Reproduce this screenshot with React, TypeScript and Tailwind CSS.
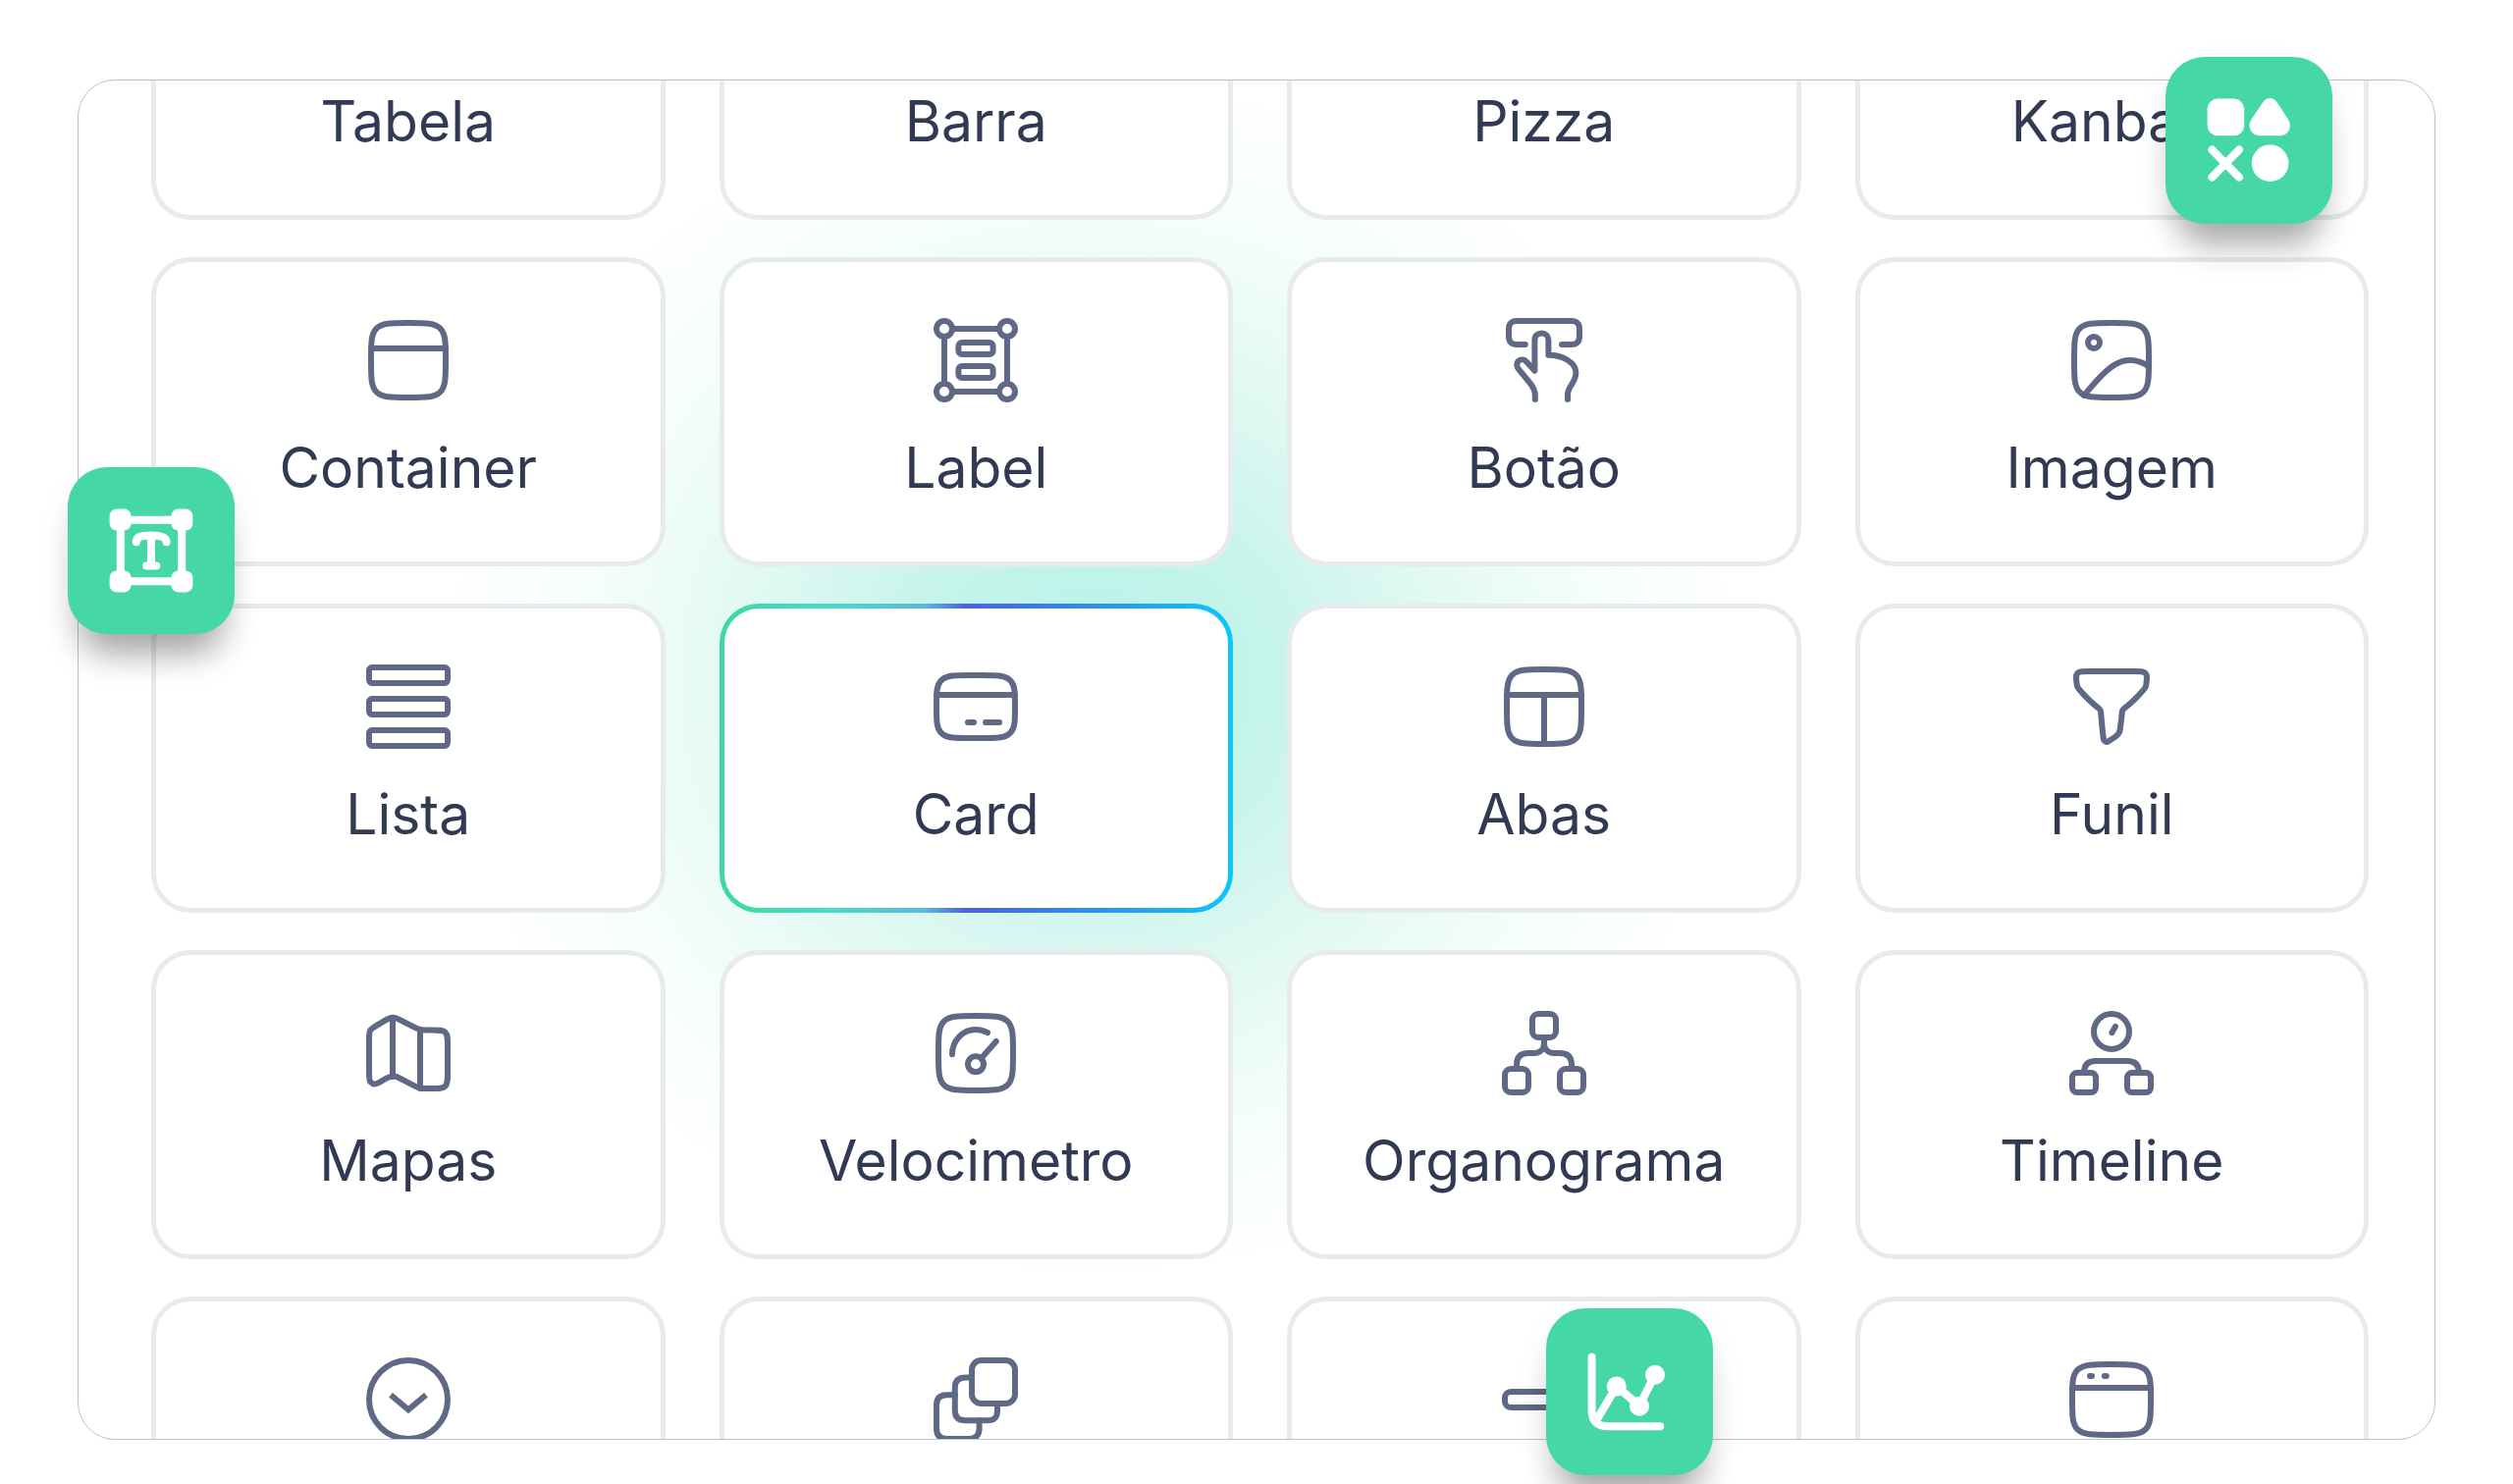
import type { ReactNode } from "react";
import { ChartNoAxesColumn, ChartPie, Columns3, Table } from "lucide-react";

type Component = {
  key: string;
  nome?: string;
  rotulo?: string;
  icone: ReactNode;
  ativo?: boolean;
};

const SQUIRCLE =
  "M2.5 12C2.5 7.52 2.5 5.28 3.89 3.89C5.28 2.5 7.52 2.5 12 2.5C16.48 2.5 18.72 2.5 20.11 3.89C21.5 5.28 21.5 7.52 21.5 12C21.5 16.48 21.5 18.72 20.11 20.11C18.72 21.5 16.48 21.5 12 21.5C7.52 21.5 5.28 21.5 3.89 20.11C2.5 18.72 2.5 16.48 2.5 12Z";

function Icon({ children }: { children: ReactNode }) {
  return (
    <svg
      viewBox="0 0 24 24"
      className="size-24 text-[#5f6885]"
      fill="none"
      stroke="currentColor"
      strokeWidth={1.5}
      strokeLinecap="round"
      strokeLinejoin="round"
      aria-hidden="true"
    >
      {children}
    </svg>
  );
}

const components: Component[] = [
  { key: "tabela", nome: "Tabela", icone: <Table className="size-24" strokeWidth={1.5} /> },
  { key: "barra", nome: "Barra", icone: <ChartNoAxesColumn className="size-24" strokeWidth={1.5} /> },
  { key: "pizza", nome: "Pizza", icone: <ChartPie className="size-24" strokeWidth={1.5} /> },
  { key: "kanban", nome: "Kanban", icone: <Columns3 className="size-24" strokeWidth={1.5} /> },
  {
    key: "container",
    nome: "Container",
    icone: (
      <Icon>
        <path d={SQUIRCLE} />
        <path d="M2.5 9H21.5" />
      </Icon>
    ),
  },
  {
    key: "label",
    nome: "Label",
    icone: (
      <Icon>
        <circle cx="4" cy="4" r="2" />
        <circle cx="20" cy="4" r="2" />
        <circle cx="4" cy="20" r="2" />
        <circle cx="20" cy="20" r="2" />
        <path d="M6 4H18M6 20H18M4 6V18M20 6V18" />
        <rect x="7.6" y="7.5" width="8.8" height="3" rx="0.9" />
        <rect x="7.6" y="13.5" width="8.8" height="3" rx="0.9" />
      </Icon>
    ),
  },
  {
    key: "botao",
    nome: "Botão",
    icone: (
      <Icon>
        <path d="M7.2 8H5C3.7 8 3 7.3 3 6V4C3 2.7 3.7 2 5 2H19C20.3 2 21 2.7 21 4V6C21 7.3 20.3 8 19 8H16.5" />
        <path d="M9.7 22V20.8C9.7 19.6 9.1 18.6 8 17.3L5.5 14.3C4.9 13.5 4.9 12.6 5.6 12.1C6.2 11.7 7 11.8 7.5 12.4L9.6 14.7V6.8C9.6 5.8 10.4 5.1 11.4 5.1C12.3 5.1 13.1 5.8 13.1 6.8V10.7C16.6 10.7 20.1 12.5 20.1 15.2C20.1 17.8 18 18.6 18 20.7V22" />
      </Icon>
    ),
  },
  {
    key: "imagem",
    nome: "Imagem",
    icone: (
      <Icon>
        <circle cx="7.5" cy="7.5" r="1.5" />
        <path d={SQUIRCLE} />
        <path d="M5 21C9.37 15.78 14.27 8.88 21.5 13.54" />
      </Icon>
    ),
  },
  {
    key: "lista",
    nome: "Lista",
    icone: (
      <Icon>
        <rect x="2" y="2" width="20" height="4" rx="0.8" />
        <rect x="2" y="10" width="20" height="4" rx="0.8" />
        <rect x="2" y="18" width="20" height="4" rx="0.8" />
      </Icon>
    ),
  },
  {
    key: "card",
    nome: "Card",
    ativo: true,
    icone: (
      <Icon>
        <path d="M2 12C2 8.46 2 6.69 3.05 5.51C3.22 5.32 3.41 5.15 3.61 4.99C4.86 4 6.74 4 10.5 4H13.5C17.26 4 19.14 4 20.39 4.99C20.59 5.15 20.78 5.32 20.95 5.51C22 6.69 22 8.46 22 12C22 15.54 22 17.31 20.95 18.49C20.78 18.68 20.59 18.85 20.39 19.01C19.14 20 17.26 20 13.5 20H10.5C6.74 20 4.86 20 3.61 19.01C3.41 18.85 3.22 18.68 3.05 18.49C2 17.31 2 15.54 2 12Z" />
        <path d="M10 16H11.5M14.5 16H18M2 9H22" />
      </Icon>
    ),
  },
  {
    key: "abas",
    nome: "Abas",
    icone: (
      <Icon>
        <path d={SQUIRCLE} />
        <path d="M2.5 9H21.5M12 9V21.5" />
      </Icon>
    ),
  },
  {
    key: "funil",
    nome: "Funil",
    icone: (
      <Icon>
        <path d="M8.86 12.51C6.38 10.65 4.6 8.6 3.63 7.45C3.33 7.09 3.23 6.83 3.17 6.38C2.97 4.82 2.86 4.04 3.32 3.52C3.78 3 4.6 3 6.24 3H17.76C19.4 3 20.22 3 20.68 3.52C21.14 4.04 21.03 4.82 20.83 6.38C20.77 6.83 20.67 7.09 20.37 7.45C19.4 8.6 17.61 10.65 15.13 12.51C14.9 12.68 14.74 12.95 14.71 13.27C14.46 15.99 14.23 17.48 14.09 18.23C13.86 19.45 12.14 20.18 11.22 20.82C10.67 21.21 10.01 20.75 9.94 20.14C9.8 19 9.55 16.69 9.27 13.27C9.24 12.95 9.09 12.68 8.86 12.51Z" />
      </Icon>
    ),
  },
  {
    key: "mapas",
    nome: "Mapas",
    icone: (
      <Icon>
        <path d="M2 8.4C2 7.3 2 6.7 2.3 6.2C2.5 5.8 3 5.5 4 4.9L6.2 3.6C7.8 2.7 8.3 2.7 10 3.6L13.9 5.6C14.7 6 15 6.1 15.9 6.1H18C19.9 6.1 20.8 6.1 21.4 6.7C22 7.3 22 8.2 22 10.2V16.9C22 18.8 22 19.8 21.4 20.4C20.8 21 19.9 21 18 21H16.4C15.1 21 14.9 21 13.7 20.4L10.8 18.9C10 18.5 9.3 18 8.5 17.9C7.5 17.8 6.6 18.3 5.7 18.8C4.4 19.6 3.8 20 3.2 19.9C2.9 19.8 2.6 19.6 2.3 19.3C2 18.9 2 18.2 2 16.6Z" />
        <path d="M8 3V18M15 6V21" />
      </Icon>
    ),
  },
  {
    key: "velocimetro",
    nome: "Velocimetro",
    icone: (
      <Icon>
        <path d={SQUIRCLE} />
        <circle cx="12" cy="14.8" r="2" />
        <path d="M13.4 13.3L17.2 9M6 12.3C6 8.8 8.7 6 12 6C13.1 6 14.1 6.3 15 6.8" />
      </Icon>
    ),
  },
  {
    key: "organograma",
    nome: "Organograma",
    icone: (
      <Icon>
        <rect x="9" y="2" width="6" height="6" rx="1.5" />
        <rect x="2" y="16" width="6" height="6" rx="1.5" />
        <rect x="16" y="16" width="6" height="6" rx="1.5" />
        <path d="M5 16V15C5 13 6 12 8 12H9.5C11 12 12 11 12 9.5V8M19 16V15C19 13 18 12 16 12H14.5C13 12 12 11 12 9.5" />
      </Icon>
    ),
  },
  {
    key: "timeline",
    nome: "Timeline",
    icone: (
      <Icon>
        <circle cx="12" cy="6.5" r="4.5" />
        <path d="M13 5.2L12.1 6.8M5 17C5 15 6 14 8 14H16C18 14 19 15 19 17" />
        <rect x="2" y="17" width="6" height="5" rx="1.2" />
        <rect x="16" y="17" width="6" height="5" rx="1.2" />
      </Icon>
    ),
  },
  {
    key: "seletor",
    rotulo: "Seletor",
    icone: (
      <Icon>
        <circle cx="12" cy="12" r="10" />
        <path d="M7.5 10.8L12 14.6L16.5 10.8" strokeLinecap="butt" strokeLinejoin="miter" />
      </Icon>
    ),
  },
  {
    key: "camadas",
    rotulo: "Camadas",
    icone: (
      <Icon>
        <rect x="11" y="2" width="11" height="11" rx="2.4" />
        <path d="M11 6.4H9.4C7.6 6.4 6.7 7.3 6.7 9V14.8C6.7 16.5 7.6 17.3 9.4 17.3H15C16.7 17.3 17.5 16.5 17.5 14.8V13" />
        <path d="M6.7 10.8H4.7C2.9 10.8 2 11.7 2 13.4V19.4C2 21.1 2.9 22 4.7 22H10.3C12 22 12.9 21.1 12.9 19.4V17.3" />
      </Icon>
    ),
  },
  {
    key: "divisor",
    rotulo: "Divisor",
    icone: (
      <Icon>
        <rect x="2" y="10" width="20" height="4" rx="1.5" />
      </Icon>
    ),
  },
  {
    key: "janela",
    rotulo: "Janela",
    icone: (
      <Icon>
        <path d="M2 12C2 7.76 2 5.64 3.46 4.32C4.93 3 7.29 3 12 3C16.71 3 19.07 3 20.54 4.32C22 5.64 22 7.76 22 12C22 16.24 22 18.36 20.54 19.68C19.07 21 16.71 21 12 21C7.29 21 4.93 21 3.46 19.68C2 18.36 2 16.24 2 12Z" />
        <path d="M2 9H22M6.5 6H7M10.2 6H10.7" />
      </Icon>
    ),
  },
];

function ComponentCard({ item }: { item: Component }) {
  return (
    <button
      type="button"
      aria-label={item.rotulo}
      aria-pressed={item.ativo}
      className={`flex flex-col items-center gap-[30px] rounded-[40px] border-[5px] pt-[52px] pb-[63px] ${
        item.ativo
          ? "border-transparent [background:linear-gradient(#fff,#fff)_padding-box,linear-gradient(to_right,#3fd89c,#46dccb_22%,#5cb8dc_40%,#4c5fe8_48%,#2f8bee_70%,#0cc8fb)_border-box]"
          : "border-[#e7ebee] bg-white bg-clip-padding"
      }`}
    >
      {item.icone}
      <span className="h-16 text-[57px] leading-16">{item.nome}</span>
    </button>
  );
}

function Tile({ className, children }: { className: string; children: ReactNode }) {
  return (
    <div
      className={`absolute flex size-[170px] items-center justify-center rounded-[40px] bg-[#45d8a4] shadow-[0_34px_34px_-14px_rgba(0,0,0,0.32),0_14px_36px_rgba(0,0,0,0.06)] ${className}`}
    >
      <svg
        viewBox="0 0 24 24"
        className="size-24 text-white"
        fill="none"
        stroke="currentColor"
        strokeWidth={2}
        strokeLinecap="round"
        strokeLinejoin="round"
        aria-hidden="true"
      >
        {children}
      </svg>
    </div>
  );
}

export default function App() {
  return (
    <main className="flex h-screen overflow-hidden bg-white px-[79px] pt-[81px] pb-[45px] font-[Inter,sans-serif] text-[#323a53]">
      <div className="relative flex min-w-0 flex-1">
        <section className="flex min-w-0 flex-1 items-center overflow-hidden rounded-[38px] border border-[#b9c5c7] bg-[radial-gradient(28%_45%_at_43%_44%,#b8f2e8,#c6f4ea_28%,#dcf8f1_48%,#ebfbf8_64%,#f7fefd_80%,#fff)] pr-[67px] pb-1 pl-[74px]">
          <div className="grid flex-1 grid-cols-4 gap-x-[55px] gap-y-[38px]">
            {components.map((c) => (
              <ComponentCard key={c.key} item={c} />
            ))}
          </div>
        </section>

        <Tile className="-top-[23px] right-[105px]">
          <rect x="1.4" y="1.4" width="9.4" height="9.4" rx="2.6" fill="currentColor" stroke="none" />
          <path
            d="M15.5 2.4C16.4 0.9 18.3 0.9 19.2 2.4L22 6.7C23.2 8.6 22 10.8 20 10.8H14.7C12.7 10.8 11.4 8.6 12.6 6.7Z"
            fill="currentColor"
            stroke="none"
          />
          <path d="M2.6 14.4L9.5 21.4M9.5 14.4L2.6 21.4" />
          <circle cx="17.4" cy="17.8" r="4.7" fill="currentColor" stroke="none" />
        </Tile>

        <Tile className="top-[28.5%] -left-[10px]">
          <g fill="currentColor" stroke="none">
            <rect x="1.4" y="1.4" width="5.5" height="5.5" rx="1.8" />
            <rect x="17.1" y="1.4" width="5.5" height="5.5" rx="1.8" />
            <rect x="1.4" y="17.1" width="5.5" height="5.5" rx="1.8" />
            <rect x="17.1" y="17.1" width="5.5" height="5.5" rx="1.8" />
          </g>
          <path d="M5 4.2H19M5 19.8H19M4.2 5V19M19.8 5V19" />
          <path d="M8.2 9.8C8.2 8.6 9.2 8.1 12 8.1C14.8 8.1 15.9 8.6 15.9 9.8M12 8.3V15.8M10.8 15.9H13.3" />
        </Tile>

        <Tile className="-bottom-[36px] left-[62.3%]">
          <path d="M2.4 3.2V16.6C2.4 19.6 3.6 20.8 6.6 20.8H19.8" />
          <path d="M3.4 19.6L8.7 10.6L14.5 15.6L18.5 7.7" />
          <g fill="currentColor" stroke="none">
            <circle cx="8.7" cy="10.6" r="2.5" />
            <circle cx="14.5" cy="15.7" r="2.5" />
            <circle cx="18.5" cy="7.7" r="2.5" />
          </g>
        </Tile>
      </div>
    </main>
  );
}
